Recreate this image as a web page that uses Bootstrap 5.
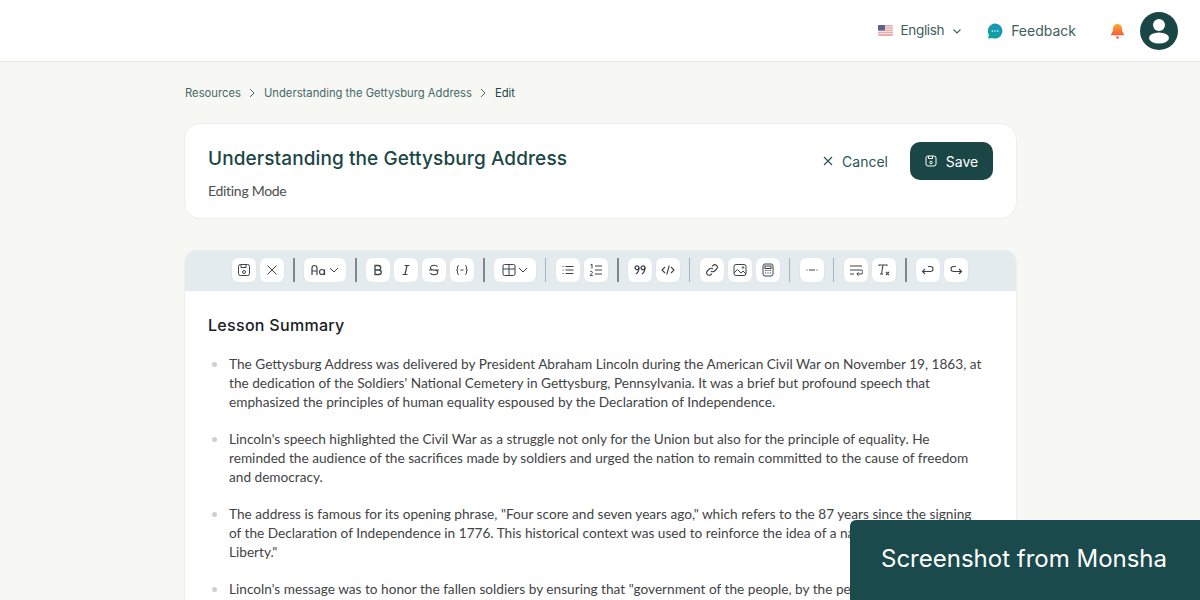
<!DOCTYPE html>
<html lang="en">
<head>
    <meta charset="UTF-8">
    <title>Edit resource</title>
    <link href="https://cdn.jsdelivr.net/npm/bootstrap@5.3.3/dist/css/bootstrap.min.css" rel="stylesheet">
    <style>
        html, body { height: 600px; overflow: hidden; }
        body { background: #f7f7f3; font-family: Inter, "Liberation Sans", sans-serif; color: #1a4645; position: relative; }
        svg { display: block; flex: none; }
        .top-bar { height: 62px; background: #fff; border-bottom: 1px solid #e8e8e6; padding-right: 22px; font-size: 14px; color: #3b5f5e; }
        .lang-name { font-size: 13.500px; letter-spacing: -.35px; }
        .flag { width: 15px; height: 11px; margin-right: 8px; }
        .feedback-icon { margin-left: 25px; }
        .bell-icon { margin: 0 15px 0 34px; }
        .avatar { width: 38px; height: 38px; border-radius: 50%; background: #1a4645; }
        .page-col { width: 833px; margin-left: 184px; }
        .crumbs { height: 61px; font-size: 11.250px; color: #45696a; gap: 7.500px; padding-left: 1px; padding-top: 1px; }
        .crumbs .now { color: #1a4645; }
        .title-card { height: 96px; background: #fff; border: 1px solid #eeeeea; border-radius: 16px; padding: 0 23px; margin-bottom: 31px; }
        .title-card h1 { font-size: 19px; font-weight: 500; color: #1a4645; margin: 0 0 10px; letter-spacing: .1px; line-height: 24px; }
        .title-card p { font-family: Lato, sans-serif; font-size: 14px; letter-spacing: -.3px; color: #4a4f4f; margin: 0; line-height: 20px; }
        .title-text { padding-top: 5px; }
        .title-actions { margin-bottom: 20px; }
        .cancel-link { font-size: 14px; color: #2b5655; gap: 9px; margin-right: 22px; }
        .save-btn { width: 83px; height: 38px; background: #1a4645; color: #fff; border-radius: 10px; font-size: 14px; gap: 9px; }
        .editor-card { background: #fff; border: 1px solid #eeeeea; border-top: 0; border-radius: 12px 12px 0 0; height: 400px; overflow: hidden; }
        .tool-row { height: 41px; background: #e3ebef; padding: 0 2px 1px 0; }
        .tool-btn { width: 24px; height: 24px; background: #fff; border-radius: 6px; color: #3d4348; box-shadow: 0 0 1px rgba(0,0,0,.12); }
        .tool-btn.wide { width: 42px; gap: 2px; }
        .tool-sep { width: 1px; height: 24px; background: #a9b2b8; margin: 0 10px 0 9px; }
        .tool-sep.dark { background: #7f888e; width: 2px; margin: 0 9px; }
        .gap-4px { gap: 4px; }
        .doc-body { padding: 23px 23px 0; }
        .doc-body h2 { font-size: 16px; font-weight: 500; color: #16201f; margin: 0 0 19px; line-height: 22px; letter-spacing: .3px; }
        .doc-body ul { margin: 0; padding: 0 0 0 21px; list-style: none; font-family: Lato, sans-serif; font-size: 13.650px; line-height: 19px; color: #3f4444; white-space: nowrap; }
        .doc-body li { margin-bottom: 18px; position: relative; }
        .doc-body li::before { content: ""; position: absolute; left: -17px; top: 7px; width: 5px; height: 5px; border-radius: 50%; background: #ccd0d2; }
        .watermark { position: absolute; right: 0; bottom: 0; width: 350px; height: 80px; background: #1a4a4b; color: #fff; font-size: 24px; padding: 0 0 3px 31px; border-top-left-radius: 6px; }
    </style>
</head>
<body>
    <header class="top-bar d-flex align-items-center justify-content-end">
        <svg class="flag" viewBox="0 0 15 11"><rect width="15" height="11" rx="1.500" fill="#e8a9a9"/><path d="M0 2h15M0 4.200h15M0 6.400h15M0 8.600h15" stroke="#f6e6e6" stroke-width="1"/><rect width="7" height="5.600" rx="1" fill="#59618f"/></svg>
        <span class="lang-name">English</span>
        <svg class="ms-2" width="10" height="10" viewBox="0 0 10 10" fill="none" stroke="#3b5f5e" stroke-width="1.100"><path d="M1.500 3.500 5 7l3.500-3.500"/></svg>
        <svg class="feedback-icon" width="16" height="16" viewBox="0 0 16 16"><defs><linearGradient id="fb" x1="0" y1="1" x2="1" y2="0"><stop offset="0" stop-color="#0ea58f"/><stop offset="1" stop-color="#1595c9"/></linearGradient></defs><path d="M8 .5a7.500 7.500 0 1 1-3 14.400L1 15.600l.9-3.700A7.500 7.500 0 0 1 8 .5z" fill="url(#fb)"/><circle cx="5.300" cy="8" r=".8" fill="#fff"/><circle cx="8" cy="8" r=".8" fill="#fff"/><circle cx="10.700" cy="8" r=".8" fill="#fff"/></svg>
        <span class="ms-2">Feedback</span>
        <svg class="bell-icon" width="15" height="16" viewBox="0 0 15 16"><defs><linearGradient id="bl" x1="0" y1="0" x2="0" y2="1"><stop offset="0" stop-color="#fbab2c"/><stop offset="1" stop-color="#f65a3f"/></linearGradient></defs><path d="M7.500 1a4.500 4.500 0 0 1 4.500 4.500c0 3.500 1.300 4.800 2 5.800v1H1v-1c.7-1 2-2.300 2-5.800A4.500 4.500 0 0 1 7.500 1z" fill="url(#bl)"/><circle cx="7.500" cy="14.500" r="1.300" fill="#f65a3f"/></svg>
        <div class="avatar d-flex align-items-center justify-content-center">
            <svg width="24" height="28" viewBox="0 0 24 28" fill="#fff"><circle cx="12" cy="8" r="6"/><ellipse cx="12" cy="21" rx="10" ry="5.500"/></svg>
        </div>
    </header>

    <main class="page-col">
        <nav class="crumbs d-flex align-items-center">
            <span>Resources</span>
            <svg width="8" height="10" viewBox="0 0 8 10" fill="none" stroke="#45696a"><path d="m2 1 4 4-4 4"/></svg>
            <span>Understanding the Gettysburg Address</span>
            <svg width="8" height="10" viewBox="0 0 8 10" fill="none" stroke="#45696a"><path d="m2 1 4 4-4 4"/></svg>
            <span class="now">Edit</span>
        </nav>

        <section class="title-card d-flex align-items-center justify-content-between">
            <div class="title-text">
                <h1>Understanding the Gettysburg Address</h1>
                <p>Editing Mode</p>
            </div>
            <div class="title-actions d-flex align-items-center">
                <div class="cancel-link d-flex align-items-center">
                    <svg width="10" height="10" viewBox="0 0 10 10" fill="none" stroke="#2b5655" stroke-width="1.200"><path d="m1 1 8 8M9 1 1 9"/></svg>
                    <span>Cancel</span>
                </div>
                <div class="save-btn d-flex align-items-center justify-content-center">
                    <svg width="12" height="12" viewBox="0 0 12 12" fill="none" stroke="#fff"><rect x="1" y="1" width="10" height="10" rx="2"/><path d="M3.500 1v2.500h4V1"/><circle cx="6" cy="7.500" r="1.300"/></svg>
                    <span>Save</span>
                </div>
            </div>
        </section>

        <section class="editor-card">
            <div class="tool-row d-flex align-items-center justify-content-center">
                <div class="d-flex gap-4px">
                    <div class="tool-btn d-flex align-items-center justify-content-center"><svg width="14" height="14" viewBox="0 0 14 14" fill="none" stroke="currentColor"><rect x="1.500" y="1.500" width="11" height="11" rx="2"/><path d="M4 1.500v3h5v-3"/><circle cx="7" cy="9" r="1.500"/></svg></div>
                    <div class="tool-btn d-flex align-items-center justify-content-center"><svg width="12" height="12" viewBox="0 0 12 12" fill="none" stroke="currentColor"><path d="m1.500 1.500 9 9M10.500 1.500l-9 9"/></svg></div>
                </div>
                <div class="tool-sep dark"></div>
                <div class="tool-btn wide d-flex align-items-center justify-content-center">
                    <svg width="16" height="12" viewBox="0 0 16 12" fill="none" stroke="currentColor" stroke-width="1.200"><path d="M1 11V4a2.500 2.500 0 0 1 5 0v7M1 7h5"/><circle cx="11" cy="8" r="2.500"/><path d="M13.500 5.500V11"/></svg>
                    <svg width="10" height="10" viewBox="0 0 10 10" fill="none" stroke="currentColor"><path d="M1 3l4 4 4-4"/></svg>
                </div>
                <div class="tool-sep dark"></div>
                <div class="d-flex gap-4px">
                    <div class="tool-btn d-flex align-items-center justify-content-center"><svg width="12" height="12" viewBox="0 0 12 12" fill="none" stroke="currentColor" stroke-width="1.300"><path d="M3 1.500h3.500a2.200 2.200 0 0 1 0 4.500H3zM3 6h4a2.200 2.200 0 0 1 0 4.500H3z"/></svg></div>
                    <div class="tool-btn d-flex align-items-center justify-content-center"><svg width="12" height="12" viewBox="0 0 12 12" fill="none" stroke="currentColor" stroke-width="1.200"><path d="M4.500 1.500h5M2.500 10.500h5M7 1.500 5 10.500"/></svg></div>
                    <div class="tool-btn d-flex align-items-center justify-content-center"><svg width="12" height="12" viewBox="0 0 12 12" fill="none" stroke="currentColor" stroke-width="1.100"><path d="M9.500 2.800C9 1.800 7.500 1.300 6 1.300c-2 0-3.500 1-3.500 2.500S4 6 6 6s3.700.7 3.700 2.300-1.700 2.500-3.700 2.500c-1.700 0-3.200-.6-3.800-1.700M1 6h10"/></svg></div>
                    <div class="tool-btn d-flex align-items-center justify-content-center"><svg width="14" height="12" viewBox="0 0 14 12" fill="none" stroke="currentColor"><path d="M4 1.500C2.500 1.500 2.500 2.500 2.500 4s0 2-1 2c1 0 1 .5 1 2s0 2.500 1.500 2.500M10 1.500c1.500 0 1.500 1 1.500 2.500s0 2 1 2c-1 0-1 .5-1 2s0 2.500-1.500 2.500M5.500 6h3"/></svg></div>
                </div>
                <div class="tool-sep dark"></div>
                <div class="tool-btn wide d-flex align-items-center justify-content-center">
                    <svg width="14" height="14" viewBox="0 0 14 14" fill="none" stroke="currentColor"><rect x="1" y="1.500" width="12" height="11" rx="1.500"/><path d="M1 6h12M7 1.500v11"/></svg>
                    <svg width="10" height="10" viewBox="0 0 10 10" fill="none" stroke="currentColor"><path d="M1 3l4 4 4-4"/></svg>
                </div>
                <div class="tool-sep"></div>
                <div class="d-flex gap-4px">
                    <div class="tool-btn d-flex align-items-center justify-content-center"><svg width="14" height="12" viewBox="0 0 14 12" fill="none" stroke="currentColor"><path d="M4.500 2.500h8M4.500 6h8M4.500 9.500h8M1.500 2.500h1M1.500 6h1M1.500 9.500h1"/></svg></div>
                    <div class="tool-btn d-flex align-items-center justify-content-center"><svg width="14" height="14" viewBox="0 0 14 14" fill="none" stroke="currentColor"><path d="M6 3h7M6 7h7M6 11h7M1.500 2 3 1.200V5.500M1 9c.5-1 2.500-.8 2.500.4 0 1-1.500 1.500-2.500 3h2.800"/></svg></div>
                </div>
                <div class="tool-sep dark"></div>
                <div class="d-flex gap-4px">
                    <div class="tool-btn d-flex align-items-center justify-content-center"><svg width="12" height="12" viewBox="0 0 12 12" fill="none" stroke="currentColor" stroke-width="1.300"><circle cx="3" cy="3.800" r="1.900"/><circle cx="9" cy="3.800" r="1.900"/><path d="M4.900 3.800c0 3-1 5-2.900 6.200M10.900 3.800c0 3-1 5-2.900 6.200"/></svg></div>
                    <div class="tool-btn d-flex align-items-center justify-content-center"><svg width="14" height="12" viewBox="0 0 14 12" fill="none" stroke="currentColor" stroke-width="1.100"><path d="M4 3 1 6l3 3M10 3l3 3-3 3M8.300 1.500 5.700 10.500"/></svg></div>
                </div>
                <div class="tool-sep"></div>
                <div class="d-flex gap-4px">
                    <div class="tool-btn d-flex align-items-center justify-content-center"><svg width="14" height="14" viewBox="0 0 14 14" fill="none" stroke="currentColor" stroke-width="1.100"><path d="M6 8a2.500 2.500 0 0 0 3.600 0l2-2A2.500 2.500 0 0 0 8 2.500l-.8.8M8 6a2.500 2.500 0 0 0-3.600 0l-2 2A2.500 2.500 0 0 0 6 11.500l.8-.8"/></svg></div>
                    <div class="tool-btn d-flex align-items-center justify-content-center"><svg width="14" height="14" viewBox="0 0 14 14" fill="none" stroke="currentColor"><rect x="1" y="1.500" width="12" height="11" rx="2"/><path d="m1 10 3.500-3.500L8 10l2-2 3 3"/><circle cx="10" cy="4.500" r=".8"/></svg></div>
                    <div class="tool-btn d-flex align-items-center justify-content-center"><svg width="14" height="14" viewBox="0 0 14 14" fill="none" stroke="currentColor"><rect x="2" y="1" width="10" height="12" rx="2"/><rect x="4" y="3" width="6" height="2.500"/><path d="M4 7.500h1.200M6.400 7.500h1.200M8.800 7.500H10M4 10h1.200M6.400 10h1.200M8.800 10H10"/></svg></div>
                </div>
                <div class="tool-sep"></div>
                <div class="tool-btn d-flex align-items-center justify-content-center"><svg width="14" height="8" viewBox="0 0 14 8" fill="none" stroke="currentColor"><path d="M1.500 4h1M4 4h6M11.500 4h1"/></svg></div>
                <div class="tool-sep"></div>
                <div class="d-flex gap-4px">
                    <div class="tool-btn d-flex align-items-center justify-content-center"><svg width="14" height="14" viewBox="0 0 14 14" fill="none" stroke="currentColor"><path d="M1 3h12M1 7h11a1.800 1.800 0 0 1 0 4H8M9.500 9.300 7.800 11l1.700 1.700M1 11h4"/></svg></div>
                    <div class="tool-btn d-flex align-items-center justify-content-center"><svg width="14" height="14" viewBox="0 0 14 14" fill="none" stroke="currentColor" stroke-width="1.100"><path d="M2 3V2h8v1M6 2 4.500 11M3 11h3M9 9l3 3M12 9l-3 3"/></svg></div>
                </div>
                <div class="tool-sep dark"></div>
                <div class="d-flex gap-4px">
                    <div class="tool-btn d-flex align-items-center justify-content-center"><svg width="14" height="12" viewBox="0 0 14 12" fill="none" stroke="currentColor" stroke-width="1.100"><path d="M1.500 7.500h8a2.500 2.500 0 0 0 0-5H7M4 5 1.500 7.500 4 10"/></svg></div>
                    <div class="tool-btn d-flex align-items-center justify-content-center"><svg width="14" height="12" viewBox="0 0 14 12" fill="none" stroke="currentColor" stroke-width="1.100"><path d="M12.500 7.500h-8a2.500 2.500 0 0 1 0-5H7M10 5l2.500 2.500L10 10"/></svg></div>
                </div>
            </div>
            <div class="doc-body">
                <h2>Lesson Summary</h2>
                <ul>
                    <li>The Gettysburg Address was delivered by President Abraham Lincoln during the American Civil War on November 19, 1863, at<br>the dedication of the Soldiers' National Cemetery in Gettysburg, Pennsylvania. It was a brief but profound speech that<br>emphasized the principles of human equality espoused by the Declaration of Independence.</li>
                    <li>Lincoln's speech highlighted the Civil War as a struggle not only for the Union but also for the principle of equality. He<br>reminded the audience of the sacrifices made by soldiers and urged the nation to remain committed to the cause of freedom<br>and democracy.</li>
                    <li>The address is famous for its opening phrase, "Four score and seven years ago," which refers to the 87 years since the signing<br>of the Declaration of Independence in 1776. This historical context was used to reinforce the idea of a nation conceived in<br>Liberty."</li>
                    <li>Lincoln's message was to honor the fallen soldiers by ensuring that "government of the people, by the people, for the people</li>
                </ul>
            </div>
        </section>
    </main>

    <div class="watermark d-flex align-items-center">Screenshot from Monsha</div>

    <script src="https://cdn.jsdelivr.net/npm/bootstrap@5.3.3/dist/js/bootstrap.bundle.min.js"></script>
</body>
</html>
